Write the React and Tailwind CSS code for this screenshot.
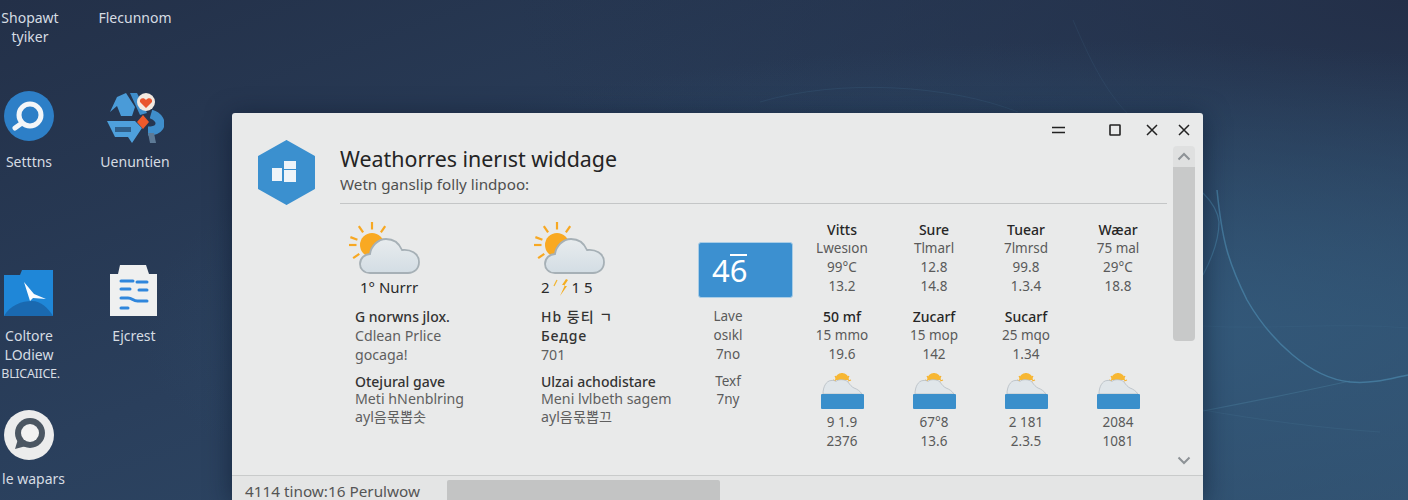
import React from "react";

const font = { fontFamily: '"Noto Sans", "Noto Sans CJK KR", sans-serif' };

function Wallpaper() {
  return (
    <svg className="absolute inset-0" width="1408" height="500" fill="none">
      <path d="M1217 190C1222 240 1228 262 1247 300C1270 340 1310 378 1350 382C1375 384 1392 378 1408 375" stroke="#4a84a8" strokeWidth="1.5" opacity="0.75" />
      <path d="M1203 193C1212 202 1218 212 1219 222C1219 240 1212 258 1203 275" stroke="#4a84a8" strokeWidth="1.2" opacity="0.6" />
      <path d="M1203 411C1250 402 1300 392 1350 381" stroke="#4a7c9c" strokeWidth="1.2" opacity="0.45" />
      <path d="M1203 410C1260 420 1320 428 1380 432" stroke="#4a7c9c" strokeWidth="1" opacity="0.2" />
      <path d="M1073 20C1090 60 1105 90 1127 113" stroke="#4a7c9c" strokeWidth="1" opacity="0.15" />
      <path d="M760 102C840 78 950 85 1018 112" stroke="#4a7c9c" strokeWidth="1" opacity="0.18" />
      <path d="M1203 326C1270 330 1340 322 1408 328" stroke="#4a7c9c" strokeWidth="1" opacity="0.12" />
    </svg>
  );
}

function SearchIcon() {
  return (
    <svg width="50" height="50" viewBox="0 0 50 50">
      <circle cx="25" cy="25" r="25" fill="#2d7fc7" />
      <circle cx="26" cy="24" r="11" fill="none" stroke="#f4f6f8" strokeWidth="5" />
      <path d="M18 32L11 37" stroke="#f4f6f8" strokeWidth="5" strokeLinecap="round" />
    </svg>
  );
}

function RecycleIcon() {
  return (
    <svg width="58" height="54" viewBox="0 0 58 54">
      <path d="M4 20L11 5L20 1L29 15L26 24H15L11 14Z" fill="#4a9bd8" />
      <path d="M24 1H31L41 21L34 23Z" fill="#3f8ecb" />
      <path d="M1 29H29L36 36L26 51L22 45H9Z" fill="#4ea0dc" />
      <rect x="9" y="35" width="16" height="5" fill="#2f5f8a" />
      <path d="M45 22C52 24 56 30 53 35C51 38 47 39 42 39" fill="none" stroke="#3f8ecb" strokeWidth="9" />
      <path d="M42 41H48L50 51H44Z" fill="#5d7a96" />
      <path d="M37 23L43 30L37 37L31 30Z" fill="#ee5a2b" />
      <circle cx="40" cy="10" r="9" fill="#f3e9e0" />
      <path d="M40 16L34 10C33 6 38 5 40 8C42 5 47 6 46 10Z" fill="#e9542d" />
    </svg>
  );
}

function FolderIcon() {
  return (
    <svg width="50" height="47" viewBox="0 0 50 47">
      <path d="M0 5H16L18 0H49V46H0Z" fill="#1f87d8" />
      <path d="M0 46C6 35 18 31 28 31C37 31 44 38 49 46Z" fill="#1a69b0" />
      <path d="M20 12L30 24L42 29L29 28L26 31Z" fill="#fafcff" />
    </svg>
  );
}

function DocIcon() {
  return (
    <svg width="50" height="52" viewBox="0 0 50 52">
      <path d="M11 0H37L40 9H48V51H1V9H9Z" fill="#eff0f0" />
      <g stroke="#2f86dc" strokeWidth="3" strokeLinecap="round">
        <path d="M12 16H24M28 17H38" />
        <path d="M12 24H21M30 25H38" />
        <path d="M12 33H19C24 33 24 37 30 36H38" fill="none" />
        <path d="M12 43H19" />
      </g>
    </svg>
  );
}

function ChatIcon() {
  return (
    <svg width="50" height="50" viewBox="0 0 50 50">
      <circle cx="25" cy="25" r="25" fill="#ececec" />
      <circle cx="26" cy="23" r="15" fill="#4b5662" />
      <path d="M14 29L11 39L22 36Z" fill="#4b5662" />
      <circle cx="26" cy="23" r="9" fill="#f2f2f2" />
    </svg>
  );
}

function DesktopIcon({ pos, labels, labelClass = "", children }) {
  return (
    <div className={`absolute w-[100px] flex flex-col items-center text-[14px] leading-[19px] text-[#d6dce3] ${pos}`}>
      {children}
      {labels.map((l) => (
        <span key={l} className={`whitespace-nowrap ${l === "BLICAIICE." ? "text-[12.5px] tracking-tight pl-[3px]" : ""} ${labelClass}`}>{l}</span>
      ))}
    </div>
  );
}

function HexLogo() {
  return (
    <svg width="57" height="65" viewBox="0 0 57 65" className="shrink-0">
      <path d="M28.5 1L56 16.5V48.5L28.5 64L1 48.5V16.5Z" fill="#3b90cf" stroke="#3b90cf" strokeWidth="2" strokeLinejoin="round" />
      <rect x="14" y="28" width="10" height="13" fill="#eef4f9" />
      <rect x="26" y="21" width="12" height="8" fill="#eef4f9" />
      <rect x="26" y="30" width="12" height="12" fill="#eef4f9" />
    </svg>
  );
}

function SunCloud({ id }) {
  const rays = [-90, -55, -125, -160, 180, 145];
  return (
    <svg width="72" height="54" viewBox="0 0 72 54" fill="none" className="overflow-visible">
      <defs>
        <linearGradient id={id} x1="0" y1="0" x2="0" y2="1">
          <stop offset="0" stopColor="#e8ecee" />
          <stop offset="1" stopColor="#d3dde4" />
        </linearGradient>
      </defs>
      {rays.map((a) => {
        const r = (a * Math.PI) / 180;
        return (
          <line key={a} x1={24 + 15.5 * Math.cos(r)} y1={23 + 15.5 * Math.sin(r)} x2={24 + 23 * Math.cos(r)} y2={23 + 23 * Math.sin(r)} stroke="#f7a823" strokeWidth="2.2" />
        );
      })}
      <circle cx="24" cy="23" r="12" fill="#f9a922" />
      <path d="M22 51C15 51 12 46 12 42C12 36 17 32 22 32C23 24 30 17 38 17C46 17 51 21 54 28C62 27 71 31 71 40C71 47 66 51 60 51Z" fill={`url(#${id})`} stroke="#a6b0b6" strokeWidth="1.8" />
    </svg>
  );
}

function Bolts() {
  return (
    <svg width="20" height="18" viewBox="0 0 20 18" className="inline-block mx-[1px]">
      <path d="M6 1L3 7" stroke="#f2b632" strokeWidth="1.2" />
      <path d="M15 0L11 6H14L9 17L16 7H13L17 1Z" fill="#f4ae22" />
    </svg>
  );
}

function CloudBar() {
  return (
    <div className="flex flex-col w-[43px]">
      <svg width="43" height="21" viewBox="0 0 43 21" fill="none">
        <path d="M21 0V4M14 3L16 6M28 3L26 6M12 7L15 8M30 7L27 8" stroke="#f6b02c" strokeWidth="1.3" />
        <path d="M14 7A7 7 0 0 1 28 7" fill="#f7b733" />
        <path d="M2 21C2 14 5 8 10 7.5C13 7 14 8 15 8.5C17 6 24 6 27 9C29 12 31 14 33 15C36 16 39 18 41 21Z" fill="#e0e6ea" stroke="#b5bdc3" strokeWidth="0.8" />
      </svg>
      <div className="h-[15px] bg-[#3a8fcb] rounded-[1px]" />
    </div>
  );
}

function Line({ bold, h = "h-[19px]", children }) {
  return (
    <div className={`${h} flex items-center justify-center whitespace-nowrap ${bold ? "text-[14px] font-medium text-[#262626]" : "text-[13.5px] text-[#5a5a5a]"}`}>
      {children}
    </div>
  );
}

function LeftLine({ bold, h = "h-[19px]", className = "", children }) {
  return (
    <div className={`${h} flex items-center whitespace-nowrap ${bold ? "text-[14px] font-medium text-[#333333]" : "text-[14.2px] text-[#5f5f5f]"} ${className}`}>
      {children}
    </div>
  );
}

const dataCols = [
  { top: ["Vitts", "Lwesıon", "99°C", "13.2"], mid: ["50 mf", "15 mmo", "19.6"], low: ["9 1.9", "2376"] },
  { top: ["Sure", "Tlmarl", "12.8", "14.8"], mid: ["Zucarf", "15 mop", "142"], low: ["67°8", "13.6"] },
  { top: ["Tuear", "7lmrsd", "99.8", "1.3.4"], mid: ["Sucarf", "25 mqo", "1.34"], low: ["2 181", "2.3.5"] },
  { top: ["Wæar", "75 mal", "29°C", "18.8"], mid: [], low: ["2084", "1081"] },
];

function DataCol({ col }) {
  return (
    <div className="w-[92px] flex flex-col items-center">
      <div className="w-full">
        {col.top.map((t, i) => <Line key={i} bold={i === 0}>{t}</Line>)}
      </div>
      <div className="w-full h-[57px] mt-[11px]">
        {col.mid.map((t, i) => <Line key={i} bold={i === 0}>{t}</Line>)}
      </div>
      <div className="mt-[9px]"><CloudBar /></div>
      <div className="w-full mt-[4px]">
        {col.low.map((t, i) => <Line key={i}>{t}</Line>)}
      </div>
    </div>
  );
}

function WindowControls() {
  return (
    <div className="h-[27px] pt-[7px] flex items-start justify-end text-[#222222]">
      <svg width="20" height="20" viewBox="0 0 20 20" className="mr-[36px]"><path d="M3 7.5H16M3 12.5H16" stroke="currentColor" strokeWidth="1.6" /></svg>
      <svg width="20" height="20" viewBox="0 0 20 20" className="mr-[17px]"><rect x="5" y="5" width="10" height="10" rx="0.5" fill="none" stroke="currentColor" strokeWidth="1.6" /></svg>
      <svg width="20" height="20" viewBox="0 0 20 20" className="mr-[12px]"><path d="M5 5L15 15M15 5L5 15" stroke="currentColor" strokeWidth="1.5" /></svg>
      <svg width="20" height="20" viewBox="0 0 20 20" className="mr-[9px]"><path d="M5 5L15 15M15 5L5 15" stroke="currentColor" strokeWidth="1.5" /></svg>
    </div>
  );
}

function ScrollRail() {
  return (
    <div className="w-[22px] ml-[6px] mt-[6px] flex flex-col items-center">
      <div className="w-full h-[21px] bg-[#dfe0e0] rounded-t-sm flex items-center justify-center">
        <svg width="14" height="9" viewBox="0 0 14 9" fill="none"><path d="M1.5 7.5L7 2L12.5 7.5" stroke="#8d9296" strokeWidth="2" /></svg>
      </div>
      <div className="w-full h-[174px] bg-[#c8c9c9] rounded-b-sm" />
      <div className="mt-auto mb-[10px]">
        <svg width="14" height="9" viewBox="0 0 14 9" fill="none"><path d="M1.5 1.5L7 7L12.5 1.5" stroke="#8d9296" strokeWidth="2" /></svg>
      </div>
    </div>
  );
}

function WeatherWindow() {
  return (
    <div className="absolute left-[232px] top-[113px] w-[971px] h-[387px] flex flex-col bg-[#e9eaea] rounded-t-[3px] shadow-[0_4px_26px_rgba(8,18,38,0.55)]">
      <WindowControls />
      <div className="flex-1 flex pl-[26px]">
        <HexLogo />
        <div className="w-[827px] ml-[25px]">
          <div className="pt-[4px] h-[34px] text-[21.4px] leading-[30px] text-[#242424] whitespace-nowrap">Weathorres inerıst widdage</div>
          <div className="h-[20px] text-[15.2px] leading-[20px] text-[#4f4f4f] whitespace-nowrap">Wetn ganslip folly lindpoo:</div>
          <div className="mt-[9px] h-px bg-[#c4c6c7]" />
          <div className="flex pt-[16px] pl-[8px]">
            <div className="w-[185px]">
              <div className="pt-[2px] h-[58px]"><SunCloud id="cloud-a" /></div>
              <div className="h-[19px] ml-[12px] flex items-center text-[15px] text-[#2a2a2a] whitespace-nowrap">1° Nurrr</div>
              <div className="ml-[7px] mt-[10px]">
                <LeftLine bold>G norwns jlox.</LeftLine>
                <LeftLine>Cdlean Prlice</LeftLine>
                <LeftLine>gocaga!</LeftLine>
              </div>
              <div className="ml-[7px] mt-[8px]">
                <LeftLine bold h="h-[18px]">Otejural gave</LeftLine>
                <LeftLine h="h-[18px]">Meti hNenblring</LeftLine>
                <LeftLine h="h-[18px]">ayl음몫뽑솟</LeftLine>
              </div>
            </div>
            <div className="w-[165px]">
              <div className="pt-[2px] h-[58px]"><SunCloud id="cloud-b" /></div>
              <div className="h-[19px] ml-[8px] flex items-center text-[15px] text-[#2a2a2a] whitespace-nowrap">2<Bolts />1 5</div>
              <div className="ml-[8px] mt-[10px]">
                <LeftLine bold className="tracking-[1px]">Hb 둥티 ㄱ</LeftLine>
                <LeftLine bold className="tracking-[0.8px]">Бeдge</LeftLine>
                <LeftLine>701</LeftLine>
              </div>
              <div className="ml-[8px] mt-[8px]">
                <LeftLine bold h="h-[18px]">Ulzai achodistare</LeftLine>
                <LeftLine h="h-[18px]">Meni lvlbeth sagem</LeftLine>
                <LeftLine h="h-[18px]">ayl음몫뽑끄</LeftLine>
              </div>
            </div>
            <div className="w-[95px]">
              <div className="mt-[22px] h-[56px] flex items-center pl-[13px] bg-[#3c90d0] border border-[#a9cde6] rounded-[3px] text-white text-[31px] leading-none">
                4<span className="relative">6<span className="absolute left-0 right-0 top-[-1px] h-[2px] bg-white" /></span>
              </div>
              <div className="w-[60px] mt-[9px]">
                <Line>Lave</Line>
                <Line>osıkl</Line>
                <Line>7no</Line>
              </div>
              <div className="w-[60px] mt-[8px]">
                <Line h="h-[18px]">Texf</Line>
                <Line h="h-[18px]">7ny</Line>
              </div>
            </div>
            <div className="flex ml-[3px]">
              {dataCols.map((c) => <DataCol key={c.top[0]} col={c} />)}
            </div>
          </div>
        </div>
        <ScrollRail />
      </div>
      <div className="h-[25px] border-t border-[#c9cbcb] bg-[#e4e5e5] flex pl-[13px]">
        <div className="w-[202px] pt-[4px] text-[15.3px] leading-[22px] text-[#555555] whitespace-nowrap">4114 tinow:16 Perulwow</div>
        <div className="w-[273px] mt-[4px] bg-[#c3c4c4] rounded-t-[2px]" />
      </div>
    </div>
  );
}

export default function App() {
  return (
    <div style={font} className="relative w-[1408px] h-[500px] overflow-hidden bg-[radial-gradient(ellipse_at_1120px_330px,#33597a_0%,rgba(51,89,122,0)_62%),radial-gradient(ellipse_at_1408px_0px,#232f48_0%,rgba(35,47,72,0)_45%),linear-gradient(160deg,#233048_0%,#2a3f5c_45%,#31506f_100%)]">
      <Wallpaper />
      <DesktopIcon pos="left-[-20px] top-[8px]" labels={["Shopawt", "tyiker"]} />
      <DesktopIcon pos="left-[85px] top-[8px]" labels={["Flecunnom"]} />
      <DesktopIcon pos="left-[-21px] top-[91px]" labels={["Setttns"]}>
        <div className="h-[61px]"><SearchIcon /></div>
      </DesktopIcon>
      <DesktopIcon pos="left-[85px] top-[92px]" labels={["Uenuntien"]}>
        <div className="h-[60px]"><RecycleIcon /></div>
      </DesktopIcon>
      <DesktopIcon pos="left-[-21px] top-[270px]" labels={["Coltore", "LOdiew", "BLICAIICE."]}>
        <div className="h-[56px]"><FolderIcon /></div>
      </DesktopIcon>
      <DesktopIcon pos="left-[84px] top-[265px]" labels={["Ejcrest"]}>
        <div className="h-[61px]"><DocIcon /></div>
      </DesktopIcon>
      <DesktopIcon pos="left-[-21px] top-[410px]" labels={["le wapars"]} labelClass="pl-[9px]">
        <div className="h-[59px]"><ChatIcon /></div>
      </DesktopIcon>
      <WeatherWindow />
    </div>
  );
}
